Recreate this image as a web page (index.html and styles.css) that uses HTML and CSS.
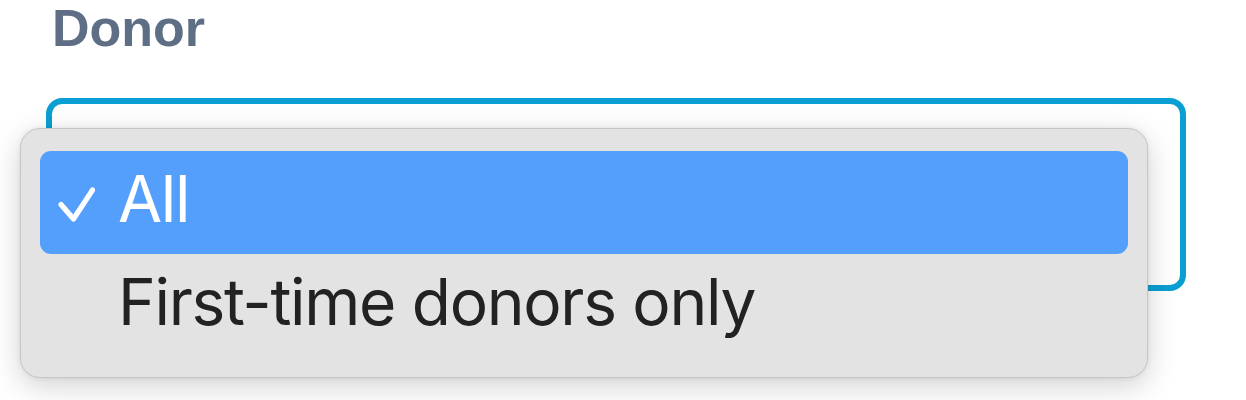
FILE: index.html
```html
<!DOCTYPE html>
<html lang="en">
<head>
<meta charset="utf-8">
<title>Donor filter</title>
<link rel="stylesheet" href="styles.css">
</head>
<body>
<div class="field">
  <label class="field-label">Donor</label>
  <div class="select-box"></div>
  <div class="menu" role="listbox">
    <div class="menu-item selected" role="option">
      <span class="check">
        <svg width="37" height="35" viewBox="0 0 37 35"><path d="M3 17.5 L15.5 32 L34.5 3" fill="none" stroke="#fff" stroke-width="5.2" stroke-linecap="round" stroke-linejoin="round"/></svg>
      </span>
      <span class="item-text">All</span>
    </div>
    <div class="menu-item" role="option">
      <span class="check"></span>
      <span class="item-text">First-time donors only</span>
    </div>
  </div>
</div>
</body>
</html>
```

FILE: styles.css
```css
html, body {
  margin: 0;
  padding: 0;
  background: #ffffff;
}

.field {
  position: relative;
  padding: 2px 0 0 46px;
  width: 1140px;
  height: 398px;
}

.field-label {
  display: block;
  padding-left: 6px;
  font-family: "Liberation Sans", Arial, sans-serif;
  font-weight: 700;
  font-size: 52px;
  line-height: 52px;
  color: #5e6e84;
}

.select-box {
  margin-top: 44px;
  box-sizing: border-box;
  width: 1140px;
  height: 193px;
  border: 6px solid #0a9fd2;
  border-radius: 16px;
  background: #ffffff;
}

.menu {
  position: absolute;
  left: 20px;
  top: 128px;
  box-sizing: border-box;
  width: 1128px;
  height: 250px;
  padding: 22px 19px 20px 19px;
  background: #e3e3e3;
  border: 1px solid #c6c6c6;
  border-radius: 20px;
  box-shadow: 0 8px 30px rgba(0, 0, 0, 0.18), 0 0 5px rgba(0, 0, 0, 0.08);
}

.menu-item {
  display: flex;
  align-items: center;
  height: 103px;
  box-sizing: border-box;
  padding: 0 0 8px 18px;
  border-radius: 11px;
  font-family: "Inter", "Noto Sans", sans-serif;
  font-size: 64px;
  letter-spacing: -1.3px;
  color: #222222;
}

.menu-item.selected {
  background: #559ffc;
  color: #ffffff;
}

.check {
  display: flex;
  align-items: center;
  width: 60px;
  height: 35px;
  flex: none;
  margin-top: 12px;
}

.check svg {
  display: block;
}

.item-text {
  line-height: normal;
}
```
